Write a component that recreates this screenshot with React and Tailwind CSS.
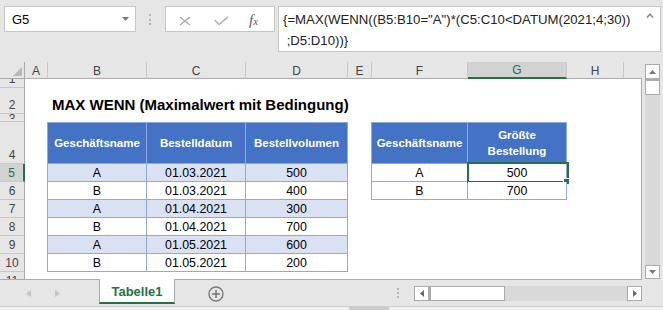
import React from "react";

const data = [
  ["A", "01.03.2021", "500"],
  ["B", "01.03.2021", "400"],
  ["A", "01.04.2021", "300"],
  ["B", "01.04.2021", "700"],
  ["A", "01.05.2021", "600"],
  ["B", "01.05.2021", "200"],
];
const data2 = [
  ["A", "500"],
  ["B", "700"],
];

function RowHeader({ children, sel, cls }) {
  return (
    <div
      className={
        "w-[25px] shrink-0 flex justify-center overflow-hidden border-b border-b-[#c8c8c8] text-[12px] leading-[14px] " +
        (sel
          ? "bg-[#d2d2d2] border-r-2 border-r-[#217346] text-[#217346] "
          : "bg-[#e6e6e6] border-r border-r-[#ababab] text-[#444] ") +
        cls
      }
    >
      {children}
    </div>
  );
}

function ColH({ w, children, sel }) {
  return (
    <div
      className={
        w +
        " flex items-center justify-center pt-[1px] border-r border-r-[#c8c8c8] " +
        (sel
          ? "bg-[#d2d2d2] border-b-2 border-b-[#217346] text-[#217346]"
          : "bg-[#e6e6e6] border-b border-b-[#ababab]")
      }
    >
      {children}
    </div>
  );
}

function HCell({ w, first, children }) {
  return (
    <div
      className={
        w +
        " flex items-center justify-center text-center bg-[#4472c4] text-white font-bold text-[11.5px] leading-[16.5px] border-t border-r border-b border-[#8ea9db] " +
        (first ? "border-l" : "")
      }
    >
      {children}
    </div>
  );
}

function DCell({ w, first, band, children }) {
  return (
    <div
      className={
        w +
        " flex items-end justify-center pb-[1px] text-[12.4px] leading-[14px] border-r border-b border-[#8ea9db] " +
        (first ? "border-l " : "") +
        (band ? "bg-[#d9e1f2]" : "bg-white")
      }
    >
      {children}
    </div>
  );
}

function Tail() {
  return (
    <>
      <div className="w-[57px]" />
      <div className="w-[18px] border-r border-r-[#ababab]" />
    </>
  );
}

function FormulaBar() {
  return (
    <div className="h-[62px] flex items-start pt-[6px] pl-[4px]">
      <div className="w-[132px] h-[26px] bg-white border border-[#c6c6c6] flex items-center justify-between pl-[7px] pr-[6px] pt-[2px] text-[13px] leading-[16px]">
        <span>G5</span>
        <svg width="7" height="4" viewBox="0 0 7 4" className="-mt-[3px]">
          <polygon points="0,0 7,0 3.5,4" fill="#7a7a7a" />
        </svg>
      </div>
      <div className="ml-[13px] mt-[8px] w-[2px] flex flex-col gap-[2.5px]">
        <div className="w-[2px] h-[2px] bg-[#b5b5b5]" />
        <div className="w-[2px] h-[2px] bg-[#b5b5b5]" />
        <div className="w-[2px] h-[2px] bg-[#b5b5b5]" />
      </div>
      <div className="ml-[14px] w-[110px] h-[26px] bg-white border border-[#c6c6c6] flex items-start">
        <svg width="12" height="10" viewBox="0 0 12 10" className="ml-[13px] mt-[9px]">
          <path d="M1 1 L11 9 M11 1 L1 9" stroke="#a8a8a8" strokeWidth="1.3" fill="none" />
        </svg>
        <svg width="15" height="10" viewBox="0 0 15 10" className="ml-[23px] mt-[9px]">
          <path d="M0.8 4 L5 8.5 L14 0.8" stroke="#b0b0b0" strokeWidth="1.6" fill="none" />
        </svg>
        <span className="ml-[20px] mt-[4px] italic font-['Liberation_Serif',serif] text-[15px] leading-[18px] text-[#5e5e5e]">
          f<span className="text-[11px]">x</span>
        </span>
      </div>
      <div className="ml-[3px] w-[383px] h-[46px] bg-white border border-[#c6c6c6] relative pl-[4px] pt-[2px] text-[13.2px] leading-[21px] text-[#222] whitespace-pre">
        <div>{'{=MAX(WENN((B5:B10="A")*(C5:C10<DATUM(2021;4;30))'}</div>
        <div>{" ;D5:D10))}"}</div>
        <svg width="8" height="5" viewBox="0 0 8 5" className="absolute right-[6px] top-[6px]">
          <path d="M1 4.5 L4 1.2 L7 4.5" stroke="#8a8a8a" strokeWidth="1.5" fill="none" />
        </svg>
      </div>
    </div>
  );
}

function Sheet() {
  return (
    <div className="flex h-[217px]">
      <div className="w-[642px] flex flex-col">
        <div className="flex h-[17px] text-[12px] leading-[14px] text-[#444]">
          <div className="w-[25px] relative border-r border-b border-[#ababab] bg-[#e6e6e6]">
            <svg width="9" height="9" viewBox="0 0 9 9" className="absolute left-[13px] top-[5px]">
              <polygon points="9,0 9,9 0,9" fill="#b9b9b9" />
            </svg>
          </div>
          <ColH w="w-[23px]">A</ColH>
          <ColH w="w-[99px]">B</ColH>
          <ColH w="w-[99px]">C</ColH>
          <ColH w="w-[102px]">D</ColH>
          <ColH w="w-[24px]">E</ColH>
          <ColH w="w-[96px]">F</ColH>
          <ColH w="w-[99px]" sel>
            G
          </ColH>
          <ColH w="w-[57px]">H</ColH>
          <div className="w-[18px] bg-[#e6e6e6] border-b border-b-[#ababab]" />
        </div>

        {/* row 1 */}
        <div className="flex h-[9px]">
          <RowHeader cls="items-end pb-[1px]">1</RowHeader>
          <div className="flex-1 bg-white border-r border-r-[#ababab]" />
        </div>
        {/* row 2 */}
        <div className="flex h-[26px]">
          <RowHeader cls="items-end pb-[1px]">2</RowHeader>
          <div className="flex-1 bg-white border-r border-r-[#ababab] flex items-end pb-[1px] pl-[27px] font-bold text-[15px] leading-[17px] whitespace-nowrap">
            MAX WENN (Maximalwert mit Bedingung)
          </div>
        </div>
        {/* row 3 */}
        <div className="flex h-[8px]">
          <RowHeader cls="items-start">
            <div className="h-[5px] overflow-hidden">
              <div className="-mt-[2px]">3</div>
            </div>
          </RowHeader>
          <div className="flex-1 bg-white border-r border-r-[#ababab]" />
        </div>
        {/* row 4 */}
        <div className="flex h-[42px]">
          <RowHeader cls="items-end pb-[1px]">4</RowHeader>
          <div className="flex flex-1 bg-white">
            <div className="w-[22px]" />
            <HCell w="w-[100px]" first>
              Geschäftsname
            </HCell>
            <HCell w="w-[99px]">Bestelldatum</HCell>
            <HCell w="w-[102px]">Bestellvolumen</HCell>
            <div className="w-[23px]" />
            <HCell w="w-[97px]" first>
              Geschäftsname
            </HCell>
            <HCell w="w-[99px]">
              Größte
              <br />
              Bestellung
            </HCell>
            <Tail />
          </div>
        </div>
        {/* rows 5-10 */}
        {data.map((r, i) => (
          <div key={i} className="flex h-[18px]">
            <RowHeader sel={i === 0} cls="items-end pb-[1px]">
              {String(i + 5)}
            </RowHeader>
            <div className="flex flex-1 bg-white">
              <div className="w-[22px]" />
              <DCell w="w-[100px]" first band={i % 2 === 0}>
                {r[0]}
              </DCell>
              <DCell w="w-[99px]" band={i % 2 === 0}>
                {r[1]}
              </DCell>
              <DCell w="w-[102px]" band={i % 2 === 0}>
                {r[2]}
              </DCell>
              <div className="w-[23px]" />
              {i < 2 ? (
                <>
                  <DCell w="w-[97px]" first>
                    {data2[i][0]}
                  </DCell>
                  <div className="relative flex">
                    <DCell w="w-[99px]">{data2[i][1]}</DCell>
                    {i === 0 && (
                      <>
                        <div className="absolute -left-[1px] -top-[2px] w-[102px] h-[21px] border-2 border-[#217346]" />
                        <div className="absolute left-[95px] top-[14px] w-[7px] h-[7px] border border-white bg-[#217346]" />
                      </>
                    )}
                  </div>
                </>
              ) : (
                <div className="w-[196px]" />
              )}
              <Tail />
            </div>
          </div>
        ))}
        {/* row 11 */}
        <div className="flex h-[7px]">
          <div className="w-[25px] shrink-0 flex justify-center items-start pt-[2px] overflow-hidden bg-[#e6e6e6] border-r border-r-[#ababab] text-[12px] leading-[14px] text-[#444]">
            11
          </div>
          <div className="flex-1 bg-white border-r border-r-[#ababab]" />
        </div>
      </div>

      {/* vertical scrollbar */}
      <div className="ml-[3px] w-[15px] flex flex-col pt-[2px]">
        <div className="h-[15px] bg-white border border-[#ababab] flex items-center justify-center">
          <svg width="7" height="4" viewBox="0 0 7 4">
            <polygon points="0,4 7,4 3.5,0" fill="#777" />
          </svg>
        </div>
        <div className="h-[16px] bg-white border border-[#ababab] border-t-2" />
        <div className="flex-1 bg-[#d9d9d9]" />
        <div className="h-[14px] bg-white border border-[#ababab] flex items-center justify-center">
          <svg width="7" height="4" viewBox="0 0 7 4">
            <polygon points="0,0 7,0 3.5,4" fill="#777" />
          </svg>
        </div>
      </div>
    </div>
  );
}

function TabBar() {
  return (
    <div className="flex h-[25px]">
      <div className="w-[99px] border-t border-[#ababab] flex items-start pl-[26px] pt-[10px]">
        <svg width="5" height="7" viewBox="0 0 5 7">
          <polygon points="5,0 5,7 0,3.5" fill="#c4c4c4" />
        </svg>
        <svg width="5" height="7" viewBox="0 0 5 7" className="ml-[24px]">
          <polygon points="0,0 0,7 5,3.5" fill="#c4c4c4" />
        </svg>
      </div>
      <div className="w-[76px] border-l border-r border-[#ababab] bg-white border-b-2 border-b-[#217346] flex items-center justify-center pt-[3px] font-bold text-[13px] leading-[16px] text-[#217346]">
        Tabelle1
      </div>
      <div className="w-[467px] border-t border-[#ababab] flex items-start pl-[33px]">
        <svg width="16" height="16" viewBox="0 0 16 16" className="mt-[6px]">
          <circle cx="8" cy="8" r="7" stroke="#7a7a7a" strokeWidth="1.4" fill="none" />
          <path d="M8 4 V12 M4 8 H12" stroke="#7a7a7a" strokeWidth="1.6" />
        </svg>
        <div className="ml-[173px] mt-[8px] w-[3px] flex flex-col gap-[2px]">
          <div className="w-[2px] h-[2px] bg-[#b5b5b5]" />
          <div className="w-[2px] h-[2px] bg-[#b5b5b5]" />
          <div className="w-[2px] h-[2px] bg-[#b5b5b5]" />
        </div>
        <div className="ml-[14px] mt-[6px] h-[15px] flex">
          <div className="w-[15px] bg-white border border-[#ababab] flex items-center justify-center">
            <svg width="4" height="7" viewBox="0 0 4 7">
              <polygon points="4,0 4,7 0,3.5" fill="#666" />
            </svg>
          </div>
          <div className="w-[76px] bg-white border border-[#ababab] border-l-2" />
          <div className="w-[122px] bg-[#d9d9d9]" />
          <div className="w-[15px] bg-white border border-[#ababab] flex items-center justify-center">
            <svg width="4" height="7" viewBox="0 0 4 7">
              <polygon points="0,0 0,7 4,3.5" fill="#666" />
            </svg>
          </div>
        </div>
      </div>
      <div className="flex-1" />
    </div>
  );
}

export default function App() {
  return (
    <div className="w-[663px] h-[310px] overflow-hidden bg-[#e6e6e6] font-['Liberation_Sans',Arial,sans-serif] text-black flex flex-col">
      <FormulaBar />
      <Sheet />
      <TabBar />
      <div className="h-[2px]" />
      <div className="h-[4px] border-t border-[#cdcdcd] bg-[#f0f0f0] flex">
        <div className="ml-[349px] w-[40px] bg-[#cbcbcb]" />
      </div>
    </div>
  );
}
